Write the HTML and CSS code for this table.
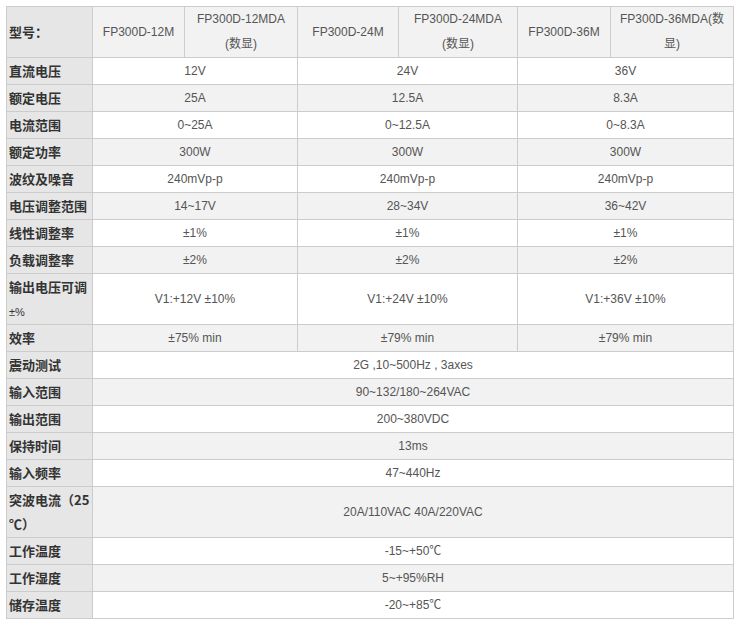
FILE: index.html
```html
<!DOCTYPE html>
<html lang="zh">
<head>
<meta charset="utf-8">
<title>FP300D 规格</title>
<link rel="stylesheet" href="styles.css">
</head>
<body>
<table class="spec">
  <colgroup>
    <col class="c-label">
    <col class="c1"><col class="c2"><col class="c3"><col class="c4"><col class="c5"><col class="c6">
  </colgroup>
  <tr class="head">
    <th class="label">型号：</th>
    <td>FP300D-12M</td>
    <td>FP300D-12MDA<br>(数显)</td>
    <td>FP300D-24M</td>
    <td>FP300D-24MDA<br>(数显)</td>
    <td>FP300D-36M</td>
    <td>FP300D-36MDA(数<br>显)</td>
  </tr>
  <tr><th class="label">直流电压</th><td colspan="2">12V</td><td colspan="2">24V</td><td colspan="2">36V</td></tr>
  <tr class="alt"><th class="label">额定电压</th><td colspan="2">25A</td><td colspan="2">12.5A</td><td colspan="2">8.3A</td></tr>
  <tr><th class="label">电流范围</th><td colspan="2">0~25A</td><td colspan="2">0~12.5A</td><td colspan="2">0~8.3A</td></tr>
  <tr class="alt"><th class="label">额定功率</th><td colspan="2">300W</td><td colspan="2">300W</td><td colspan="2">300W</td></tr>
  <tr><th class="label">波纹及噪音</th><td colspan="2">240mVp-p</td><td colspan="2">240mVp-p</td><td colspan="2">240mVp-p</td></tr>
  <tr class="alt"><th class="label">电压调整范围</th><td colspan="2">14~17V</td><td colspan="2">28~34V</td><td colspan="2">36~42V</td></tr>
  <tr><th class="label">线性调整率</th><td colspan="2">±1%</td><td colspan="2">±1%</td><td colspan="2">±1%</td></tr>
  <tr class="alt"><th class="label">负载调整率</th><td colspan="2">±2%</td><td colspan="2">±2%</td><td colspan="2">±2%</td></tr>
  <tr class="tall"><th class="label">输出电压可调<br><span class="sym">±%</span></th><td colspan="2">V1:+12V ±10%</td><td colspan="2">V1:+24V ±10%</td><td colspan="2">V1:+36V ±10%</td></tr>
  <tr class="alt"><th class="label">效率</th><td colspan="2">±75% min</td><td colspan="2">±79% min</td><td colspan="2">±79% min</td></tr>
  <tr><th class="label">震动测试</th><td colspan="6">2G ,10~500Hz , 3axes</td></tr>
  <tr class="alt"><th class="label">输入范围</th><td colspan="6">90~132/180~264VAC</td></tr>
  <tr><th class="label">输出范围</th><td colspan="6">200~380VDC</td></tr>
  <tr class="alt"><th class="label">保持时间</th><td colspan="6">13ms</td></tr>
  <tr><th class="label">输入频率</th><td colspan="6">47~440Hz</td></tr>
  <tr class="alt tall"><th class="label">突波电流（25<br>℃）</th><td colspan="6">20A/110VAC 40A/220VAC</td></tr>
  <tr><th class="label">工作温度</th><td colspan="6">-15~+50℃</td></tr>
  <tr class="alt"><th class="label">工作湿度</th><td colspan="6">5~+95%RH</td></tr>
  <tr><th class="label">储存温度</th><td colspan="6">-20~+85℃</td></tr>
</table>
</body>
</html>
```

FILE: styles.css
```css
html, body {
  margin: 0;
  padding: 0;
  background: #ffffff;
}

body {
  padding: 6px 0 0 6px;
  font-family: "Liberation Sans", Arial, "Noto Sans CJK SC", sans-serif;
  font-size: 12px;
  color: #555555;
}

.spec {
  border-collapse: collapse;
  table-layout: fixed;
  width: 727px;
}

.c-label { width: 86px; }
.c1 { width: 92px; }
.c2 { width: 113px; }
.c3 { width: 101px; }
.c4 { width: 119px; }
.c5 { width: 93px; }
.c6 { width: 123px; }

.spec th,
.spec td {
  border: 1px solid #cccccc;
  padding: 0;
  height: 26px;
  line-height: 24px;
  vertical-align: middle;
  text-align: center;
  background: #ffffff;
}

.spec tr.head td,
.spec tr.tall td {
  line-height: 25px;
}

.spec tr.alt td,
.spec tr.head td {
  background: #f2f2f2;
}

.spec th.label {
  text-align: left;
  padding-left: 2px;
  background: #e6e6e6;
  font-family: "Noto Sans CJK SC", "Liberation Sans", sans-serif;
  font-weight: bold;
  font-size: 13px;
  line-height: 22px;
  color: #333333;
}

.spec tr.tall th.label {
  line-height: 24px;
}

.spec tr.head th,
.spec tr.head td,
.spec tr.tall th,
.spec tr.tall td {
  height: 50px;
}

.spec .sym {
  font-family: "Liberation Sans", sans-serif;
  font-weight: normal;
  font-size: 11px;
  line-height: 20px;
}
```
